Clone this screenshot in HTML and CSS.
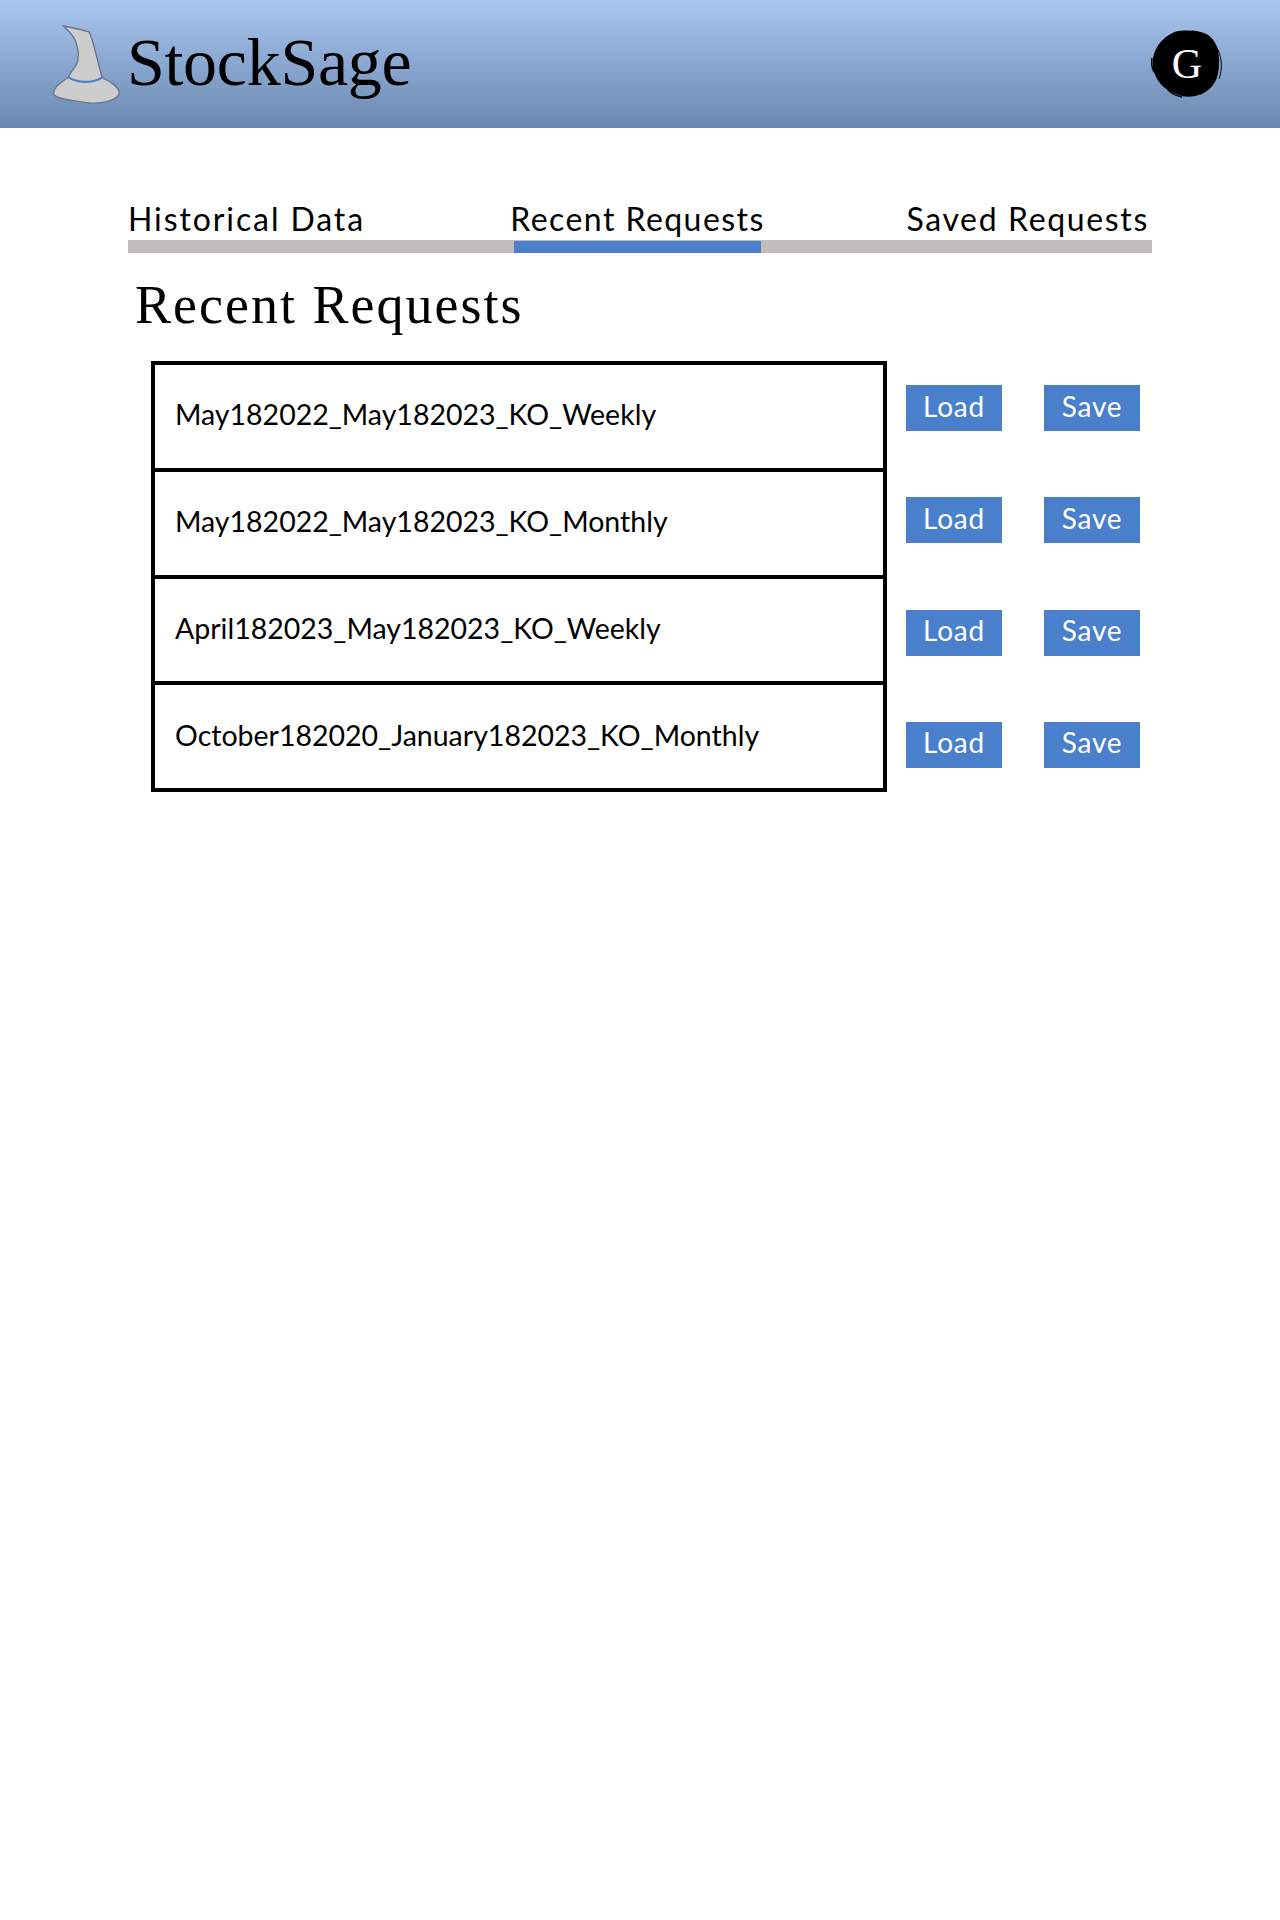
FILE: index.html
```html
<!DOCTYPE html>
<html lang="en">
<head>
    <meta charset="UTF-8">
    <meta name="viewport" content="width=device-width, initial-scale=1.0">
    <title>StockSage</title>
    <link rel="stylesheet" href="styles.css">
</head>
<body>
    <header>
        <div class="brand">
            <svg class="hat" viewBox="45 30 195 230" width="67" height="79">
                <path d="M75 33 C100 38 130 44 150 50 C165 80 172 130 188 183 C215 195 238 213 238 228 C232 250 190 260 150 257 C110 250 60 248 47 232 C42 215 70 195 90 182 C94 168 112 152 115 140 C120 132 116 128 118 122 C122 110 116 95 110 75 C100 55 88 45 75 33 Z" fill="#cdcdcd" stroke="#66768e" stroke-width="4"/>
                <path d="M90 182 C115 200 160 200 188 183" fill="none" stroke="#4a80cb" stroke-width="6"/>
            </svg>
            <div class="logo">StockSage</div>
        </div>
        <div class="avatar">
            <svg class="avatar-ink" viewBox="0 0 70 68" width="70" height="68">
                <path d="M26 1 C33 0 48 0 56 5 C64 10 68 22 67 34 C67 48 62 58 50 64 C42 67 32 68 24 64 C12 60 3 50 1 38 C0 32 1 28 2 24 C6 12 15 4 26 1 Z" fill="#000"/>
                <path d="M40 1 C54 2 66 12 69 30 C70 38 69 44 67 49" fill="none" stroke="#000" stroke-width="1"/>
                <path d="M0 28 C-1 33 0 38 2 42 M16 60 C20 64 25 66 30 67" fill="none" stroke="#000" stroke-width="1.5"/>
            </svg>
            <span class="avatar-letter">G</span>
        </div>
    </header>
    <main>
        <nav class="tabs">
            <div class="tab tab-first"><span>Historical Data</span><div class="tab-bar"></div></div>
            <div class="tab tab-mid active"><span>Recent Requests</span><div class="tab-bar"></div></div>
            <div class="tab tab-last"><span>Saved Requests</span><div class="tab-bar"></div></div>
        </nav>
        <h2>Recent Requests</h2>
        <section class="requests">
            <ul class="request-list">
                <li>May182022_May182023_KO_Weekly</li>
                <li>May182022_May182023_KO_Monthly</li>
                <li>April182023_May182023_KO_Weekly</li>
                <li>October182020_January182023_KO_Monthly</li>
            </ul>
            <div class="request-actions">
                <div class="action-row"><button>Load</button><button>Save</button></div>
                <div class="action-row"><button>Load</button><button>Save</button></div>
                <div class="action-row"><button>Load</button><button>Save</button></div>
                <div class="action-row"><button>Load</button><button>Save</button></div>
            </div>
        </section>
    </main>
</body>
</html>
```
FILE: styles.css
```css
body {
    font-family: 'Lato', sans-serif;
    background: #fff;
    color: #000;
    margin: 0;
}
header {
    height: 128px;
    background: linear-gradient(#a8c6ef, #6a88b0);
    padding: 0 58px 0 53px;
    display: flex;
    justify-content: space-between;
    align-items: center;
}
.brand {
    display: flex;
    align-items: center;
}
.hat {
    margin-right: 7px;
}
.logo {
    font-family: 'Liberation Serif', serif;
    font-size: 68px;
    letter-spacing: -0.3px;
    line-height: 68px;
    margin-top: -4px;
}
.avatar {
    width: 70px;
    height: 68px;
    display: flex;
    align-items: center;
    justify-content: center;
    position: relative;
}
.avatar-ink {
    position: absolute;
    top: 0;
    left: 0;
    overflow: visible;
}
.avatar-letter {
    position: relative;
    font-family: 'Liberation Serif', serif;
    font-size: 42px;
    color: #fff;
}
main {
    padding: 69px 128px 0;
}
.tabs {
    display: flex;
}
.tab {
    display: flex;
    flex-direction: column;
    font-size: 32px;
    letter-spacing: 1.45px;
    line-height: 43px;
    white-space: nowrap;
}
.tab-first { width: 386px; letter-spacing: 1.9px; }
.tab-mid { width: 247px; align-items: center; }
.tab-last { width: 391px; align-items: flex-end; letter-spacing: 1.65px; }
.tab-last span { padding-right: 3px; }
.tab-bar {
    height: 13px;
    width: 100%;
    background: #c1bdbb;
}
.active .tab-bar {
    background: linear-gradient(#c1bdbb 1px, #4a80cb 1px);
}
h2 {
    font-family: 'Liberation Serif', serif;
    font-weight: 400;
    font-size: 54px;
    letter-spacing: 2px;
    line-height: 62px;
    margin: 21px 0 25px 7px;
}
.requests {
    display: flex;
    margin-left: 23px;
}
.request-list {
    list-style: none;
    margin: 0;
    padding: 0;
    width: 736px;
    height: 431px;
    box-sizing: border-box;
    border: 4px solid #000;
    display: flex;
    flex-direction: column;
}
.request-list li {
    flex: 1;
    display: flex;
    align-items: center;
    padding: 0 0 4px 20px;
    font-size: 28.5px;
}
.request-list li + li {
    border-top: 4px solid #000;
}
.request-actions {
    margin-left: 19px;
    padding-top: 24px;
    display: flex;
    flex-direction: column;
    gap: 66.3px;
}
.action-row {
    display: flex;
    gap: 42px;
}
button {
    width: 96px;
    height: 46px;
    padding: 0 0 5px;
    background: #4a80cb;
    border: none;
    color: #fff;
    font-family: 'Lato', sans-serif;
    font-size: 28px;
    letter-spacing: 0.8px;
}
```
